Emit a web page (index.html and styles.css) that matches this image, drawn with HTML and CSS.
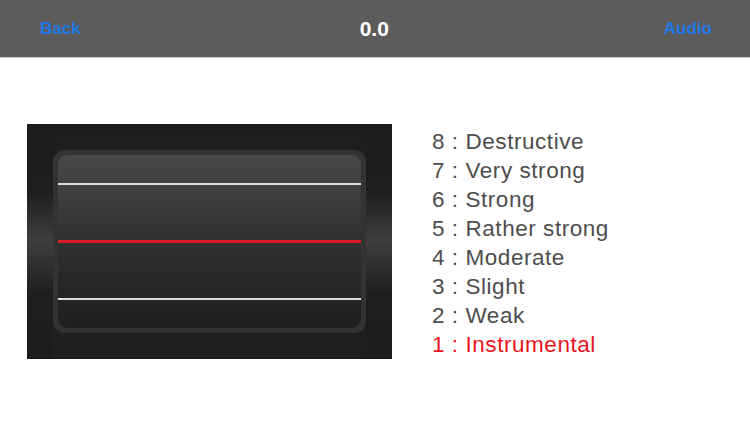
FILE: index.html
```html
<!DOCTYPE html>
<html>
<head>
<meta charset="utf-8">
<link rel="stylesheet" href="styles.css">
</head>
<body>
<div class="nav">
  <span class="nav-btn">Back</span>
  <span class="nav-title">0.0</span>
  <span class="nav-btn">Audio</span>
</div>
<div class="main">
  <div class="panel">
    <div class="ring">
      <div class="screen">
        <div class="line white"></div>
        <div class="line red"></div>
        <div class="line white"></div>
      </div>
    </div>
  </div>
  <ul class="scale">
    <li>8 : Destructive</li>
    <li>7 : Very strong</li>
    <li>6 : Strong</li>
    <li>5 : Rather strong</li>
    <li>4 : Moderate</li>
    <li>3 : Slight</li>
    <li>2 : Weak</li>
    <li class="active">1 : Instrumental</li>
  </ul>
</div>
</body>
</html>
```
FILE: styles.css
```css
html, body {
  margin: 0;
  padding: 0;
  width: 750px;
  height: 422px;
  background: #ffffff;
  font-family: "Liberation Sans", Arial, sans-serif;
  overflow: hidden;
}
.nav {
  height: 57px;
  background: #5c5c5c;
  border-bottom: 1px solid #c8c8c8;
  display: flex;
  align-items: center;
  justify-content: space-between;
  padding: 0 38px 0 40px;
  box-sizing: content-box;
}
.nav-btn {
  color: #1f78e8;
  font-weight: bold;
  font-size: 17px;
  margin-top: 1px;
}
.nav-title {
  color: #ffffff;
  font-size: 21px;
  font-weight: bold;
  margin-left: 4px;
  margin-top: 1px;
}
.main {
  display: flex;
  align-items: flex-start;
  padding: 66px 0 0 27px;
}
.panel {
  width: 365px;
  height: 235px;
  background: linear-gradient(180deg, #1c1c1c 0%, #1e1e1e 28%, #3e3e3e 50%, #1f1f1f 72%, #1c1c1c 100%);
  position: relative;
  box-sizing: border-box;
  padding: 26px 26px 26px 26px;
}
.panel::before {
  content: "";
  position: absolute;
  left: 26px; right: 26px; top: 0; bottom: 0;
  background: linear-gradient(180deg, #1d1d1d 0%, #222 45%, #262626 55%, #1e1e1e 100%);
  pointer-events: none;
}
.ring {
  position: relative;
  height: 183px;
  background: #333333;
  border-radius: 12px;
  padding: 5px;
  box-sizing: border-box;
}
.screen {
  height: 100%;
  border-radius: 9px;
  background: linear-gradient(180deg, #484848 0%, #3a3a3a 30%, #2c2c2c 60%, #1f1f1f 100%);
  display: flex;
  flex-direction: column;
  padding-top: 28px;
  box-sizing: border-box;
}
.line {
  height: 2px;
}
.line.white {
  background: #dcdcdc;
}
.line.red {
  height: 3px;
  background: #d41c22;
  margin: 55px 0 55px 0;
}
.scale {
  list-style: none;
  margin: 3px 0 0 40px;
  padding: 0;
}
.scale li {
  font-size: 22.5px;
  line-height: 29px;
  letter-spacing: 0.55px;
  color: #4d4d4d;
  white-space: nowrap;
}
.scale li.active {
  color: #e8141c;
}
```
